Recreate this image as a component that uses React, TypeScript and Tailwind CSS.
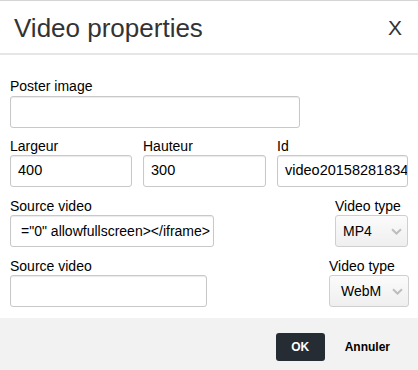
import React from "react";

const boxCls =
  "flex h-[32px] items-center overflow-hidden whitespace-nowrap rounded-[3px] border border-[#c8c8c8] bg-white text-black shadow-[inset_0_1px_1px_rgba(0,0,0,0.08)]";

function Field({
  value,
  w,
  extra = "pl-[7px] text-[14.5px]",
}: {
  value: string;
  w: string;
  extra?: string;
}) {
  return (
    <div className={`${boxCls} ${w} ${extra}`}>
      <span className="shrink-0">{value}</span>
    </div>
  );
}

function Chevron() {
  return (
    <svg width="11" height="7" viewBox="0 0 11 7" className="block">
      <path d="M1 1.2 L5.5 5.5 L10 1.2" fill="none" stroke="#bdbdbd" strokeWidth="2" />
    </svg>
  );
}

function Select({ value, w, pl }: { value: string; w: string; pl: string }) {
  return (
    <div
      className={`flex h-[32px] items-center justify-between rounded-[3px] border border-[#cfcfcf] bg-gradient-to-b from-[#fbfbfb] to-[#efefef] pr-[5px] text-[14px] text-black ${w} ${pl}`}
    >
      <span>{value}</span>
      <Chevron />
    </div>
  );
}

export default function App() {
  return (
    <div
      className="flex h-[370px] w-[418px] flex-col overflow-hidden border-t border-[#d4d4d4] bg-white"
      style={{ fontFamily: '"Liberation Sans", Arial, sans-serif' }}
    >
      <div className="flex h-[54px] shrink-0 items-start justify-between border-b-2 border-[#e6e6e6] pl-[14px] pr-[16px]">
        <div className="pt-[12px] text-[26px] leading-[30px] text-[#333]">Video properties</div>
        <div className="pt-[15px] text-[21px] leading-[24px] text-[#333]">X</div>
      </div>

      <div className="flex flex-col px-[10px] pt-[23px] pb-[11px] text-[14px] text-black">
        <div>
          <label className="mb-[1px] block leading-[17px]">Poster image</label>
          <Field value="" w="w-[290px]" />
        </div>

        <div className="mt-[10px] flex">
          <div className="w-[122px]">
            <label className="block leading-[17px]">Largeur</label>
            <Field value="400" w="w-[122px]" />
          </div>
          <div className="ml-[11px] w-[123px]">
            <label className="block leading-[17px]">Hauteur</label>
            <Field value="300" w="w-[123px]" />
          </div>
          <div className="ml-[11px] w-[131px]">
            <label className="block leading-[17px]">Id</label>
            <Field value="video20158281834567" w="w-[131px]" />
          </div>
        </div>

        <div className="mt-[11px] flex justify-between">
          <div>
            <label className="block leading-[17px]">Source video</label>
            <Field
              value={'="0" allowfullscreen></iframe>'}
              w="w-[204px]"
              extra="justify-end pr-[3px] text-[14px]"
            />
          </div>
          <div className="w-[73px]">
            <label className="block leading-[17px]">Video type</label>
            <Select value="MP4" w="w-[73px]" pl="pl-[7px]" />
          </div>
        </div>

        <div className="mt-[11px] -mr-[1px] flex justify-between">
          <div>
            <label className="block leading-[17px]">Source video</label>
            <Field value="" w="w-[197px]" />
          </div>
          <div className="w-[80px]">
            <label className="block leading-[17px]">Video type</label>
            <Select value="WebM" w="w-[80px]" pl="pl-[11px]" />
          </div>
        </div>
      </div>

      <div className="flex flex-1 items-start justify-end bg-[#f2f2f2] pt-[15px] pr-[28px]">
        <button className="h-[28px] w-[49px] rounded-[3px] bg-[#252c34] text-[12px] font-bold text-white">
          OK
        </button>
        <button className="ml-[20px] h-[28px] text-[12px] font-bold text-black">Annuler</button>
      </div>
    </div>
  );
}
